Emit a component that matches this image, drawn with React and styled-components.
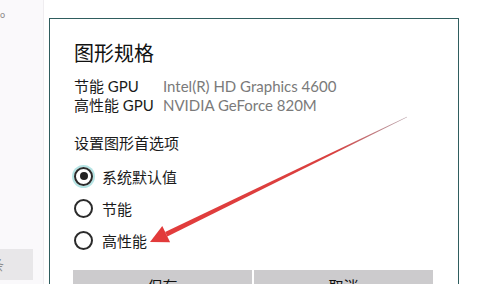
import React from "react";
import styled, { createGlobalStyle } from "styled-components";

const GlobalStyle = createGlobalStyle`
	html, body {
		margin: 0;
		padding: 0;
		background: #fff;
	}
	body {
		font-family: "Lato", "Noto Sans CJK SC", sans-serif;
		color: #1a1a1a;
	}
`;

const Page = styled.div`
	position: relative;
	display: flex;
	width: 504px;
	height: 284px;
	overflow: hidden;
	background: #fff;
`;

const SidePane = styled.div`
	width: 43px;
	flex: none;
	display: flex;
	flex-direction: column;
	background: #faf9fb;
	border-right: 1px solid #efedf0;
`;

const StrayGlyph = styled.div`
	margin-top: 9px;
	height: 12px;
	font-size: 9px;
	line-height: 12px;
	color: #8a8a8a;
`;

const SideButton = styled.div`
	margin-top: 228px;
	width: 33px;
	height: 31px;
	background: #e8e7e9;
	overflow: hidden;
	font-size: 14px;
	line-height: 31px;
	color: #8c8c8c;
	span {
		display: inline-block;
		margin-left: -10px;
	}
`;

const Dialog = styled.div`
	margin: 18px 0 0 5px;
	width: 410px;
	flex: none;
	border: 1px solid #2f5d5e;
	border-bottom: none;
	background: #fff;
	padding: 20px 24px 0 23px;
	box-sizing: border-box;
	height: 290px;
`;

const Title = styled.h2`
	margin: 0 0 0 1px;
	font-family: "Noto Sans CJK SC", sans-serif;
	font-size: 20px;
	line-height: 28px;
	font-weight: normal;
	color: #111;
`;

const SpecGrid = styled.div`
	margin: 10px 0 0 1px;
	display: grid;
	grid-template-columns: 89px auto;
	font-size: 15px;
	line-height: 19px;
`;

const SpecLabel = styled.div`
	color: #1a1a1a;
`;

const SpecValue = styled.div`
	color: #7a7a7a;
`;

const Heading = styled.div`
	margin: 19px 0 0 1px;
	font-size: 15px;
	line-height: 19px;
	color: #1a1a1a;
`;

const Options = styled.div`
	margin-top: 7px;
	display: flex;
	flex-direction: column;
`;

const OptionRow = styled.label`
	display: flex;
	align-items: center;
	gap: 9px;
	height: 32px;
	padding-left: 1px;
	font-size: 15px;
	color: #1a1a1a;
`;

const Radio = styled.span`
	position: relative;
	width: 19px;
	height: 19px;
	box-sizing: border-box;
	border-radius: 50%;
	border: 2px solid #2b2b2b;
	box-shadow: ${(p) => (p.$checked ? "0 0 0 2px rgba(120, 205, 205, 0.55)" : "none")};
	&::after {
		content: "";
		display: ${(p) => (p.$checked ? "block" : "none")};
		position: absolute;
		left: 3.5px;
		top: 3.5px;
		width: 8px;
		height: 8px;
		border-radius: 50%;
		background: #222;
	}
`;

const ButtonRow = styled.div`
	margin-top: 14px;
	display: flex;
	gap: 2px;
`;

const Button = styled.div`
	width: 179px;
	height: 32px;
	background: #cccbcd;
	font-size: 15px;
	line-height: 32px;
	text-align: center;
	color: #111;
`;

const Overlay = styled.svg`
	position: absolute;
	left: 0;
	top: 0;
	pointer-events: none;
`;

const options = [
	{ label: "系统默认值", checked: true },
	{ label: "节能", checked: false },
	{ label: "高性能", checked: false },
];

const Arrow = () => (
	<Overlay width="504" height="284" viewBox="0 0 504 284">
		<defs>
			<linearGradient id="shaft" x1="166" y1="234" x2="407" y2="117" gradientUnits="userSpaceOnUse">
				<stop offset="0" stopColor="#e23c3c" />
				<stop offset="0.7" stopColor="#d9403f" />
				<stop offset="1" stopColor="#8b6470" stopOpacity="0.6" />
			</linearGradient>
		</defs>
		<polygon
			points="167.3,236.4 407.1,117.3 406.9,116.7 165.1,231.9"
			fill="url(#shaft)"
		/>
		<polygon points="150,242 162.3,226 170.1,242.2" fill="#e23a3a" />
	</Overlay>
);

export default function App() {
	return (
		<>
			<GlobalStyle />
			<Page>
				<SidePane>
					<StrayGlyph>o</StrayGlyph>
					<SideButton>
						<span>条</span>
					</SideButton>
				</SidePane>
				<Dialog>
					<Title>图形规格</Title>
					<SpecGrid>
						<SpecLabel>节能 GPU</SpecLabel>
						<SpecValue>Intel(R) HD Graphics 4600</SpecValue>
						<SpecLabel>高性能 GPU</SpecLabel>
						<SpecValue>NVIDIA GeForce 820M</SpecValue>
					</SpecGrid>
					<Heading>设置图形首选项</Heading>
					<Options>
						{options.map((o) => (
							<OptionRow key={o.label}>
								<Radio $checked={o.checked} />
								{o.label}
							</OptionRow>
						))}
					</Options>
					<ButtonRow>
						<Button>保存</Button>
						<Button>取消</Button>
					</ButtonRow>
				</Dialog>
				<Arrow />
			</Page>
		</>
	);
}
